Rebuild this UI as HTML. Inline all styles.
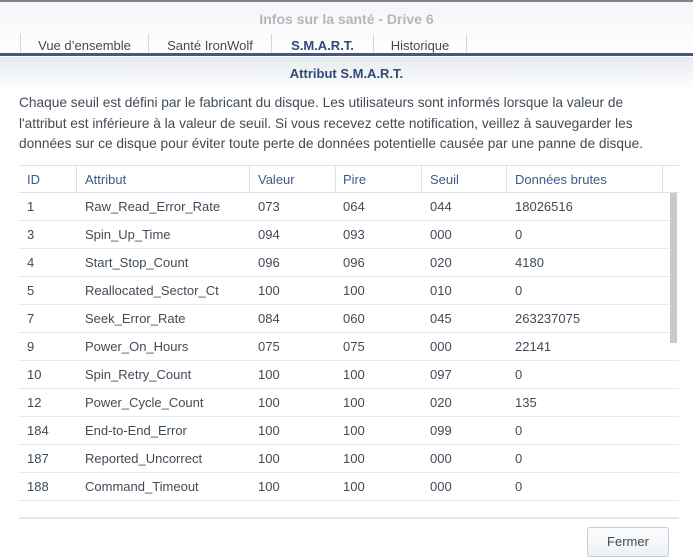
<!DOCTYPE html>
<html><head><meta charset="utf-8"><style>
*{margin:0;padding:0;box-sizing:border-box}
body{width:693px;height:547px;overflow:hidden;font-family:"Liberation Sans",sans-serif;background:#fff;position:relative;color:#414b55}
.top{position:absolute;left:0;top:0;width:693px;height:56px;background:linear-gradient(#f4f5f7,#fff);border-top:2px solid #7f8590}
.title{position:absolute;top:9px;width:100%;text-align:center;font-size:14px;font-weight:bold;color:#b3b7bd}
.tab{position:absolute;top:34px;height:20px;font-size:13px;color:#414b55;text-align:center;border-left:1px solid #d5d9de;line-height:23px}
.blue{position:absolute;left:0;top:53px;width:693px;height:3px;background:#3c5a8c}
.sec{position:absolute;top:57px;left:0;width:693px;height:34px;background:linear-gradient(#e6eaef,#fff);text-align:center;font-size:13px;font-weight:bold;color:#2f4a7a;line-height:34px}
.p{position:absolute;left:19px;top:93px;font-size:13.7px;line-height:20.5px;color:#414b55;white-space:nowrap}
.tbl{position:absolute;left:19px;top:165px;width:660px;border-top:1px solid #dde1e6}
.hd{height:27px;border-bottom:1px solid #dde1e6;position:relative;color:#3a5a8a;font-size:13px}
.row{height:28px;border-bottom:1px solid #e8ebee;position:relative;font-size:13px;color:#414b55}
.c{position:absolute;top:0;line-height:27px;white-space:nowrap}
.hd .sep{position:absolute;top:0;height:27px;border-left:1px solid #dde1e6}
.sb{position:absolute;left:670px;top:193px;width:7px;height:150px;background:#c9c9c9}
.bot{position:absolute;left:19px;top:517px;width:660px;border-top:2px solid #e4e7ea}
.btn{position:absolute;left:587px;top:527px;width:82px;height:30px;border:1px solid #c5cbd2;border-radius:3px;background:linear-gradient(#fbfcfd,#eef1f4);font-size:13px;text-align:center;line-height:28px;color:#414b55}
</style></head><body>
<div class="top"><div class="title">Infos sur la santé - Drive 6</div></div>
<div class="tab" style="left:20px;width:128px">Vue d’ensemble</div>
<div class="tab" style="left:148px;width:123px">Santé IronWolf</div>
<div class="tab" style="left:271px;width:102px;font-weight:bold;color:#2f4a7a">S.M.A.R.T.</div>
<div class="tab" style="left:373px;width:94px;border-right:1px solid #d5d9de">Historique</div>
<div class="blue"></div>
<div class="sec">Attribut S.M.A.R.T.</div>
<div class="p">Chaque seuil est défini par le fabricant du disque. Les utilisateurs sont informés lorsque la valeur de<br>l'attribut est inférieure à la valeur de seuil. Si vous recevez cette notification, veillez à sauvegarder les<br>données sur ce disque pour éviter toute perte de données potentielle causée par une panne de disque.</div>
<div class="tbl">
<div class="hd"><span class="c" style="left:8px">ID</span><span class="sep" style="left:57px"></span><span class="c" style="left:66px">Attribut</span><span class="sep" style="left:230px"></span><span class="c" style="left:239px">Valeur</span><span class="sep" style="left:316px"></span><span class="c" style="left:324px">Pire</span><span class="sep" style="left:402px"></span><span class="c" style="left:411px">Seuil</span><span class="sep" style="left:487px"></span><span class="c" style="left:496px">Données brutes</span><span class="sep" style="left:643px"></span></div>
<div class="row"><span class="c" style="left:8px">1</span><span class="c" style="left:66px">Raw_Read_Error_Rate</span><span class="c" style="left:239px">073</span><span class="c" style="left:324px">064</span><span class="c" style="left:411px">044</span><span class="c" style="left:496px">18026516</span></div>
<div class="row"><span class="c" style="left:8px">3</span><span class="c" style="left:66px">Spin_Up_Time</span><span class="c" style="left:239px">094</span><span class="c" style="left:324px">093</span><span class="c" style="left:411px">000</span><span class="c" style="left:496px">0</span></div>
<div class="row"><span class="c" style="left:8px">4</span><span class="c" style="left:66px">Start_Stop_Count</span><span class="c" style="left:239px">096</span><span class="c" style="left:324px">096</span><span class="c" style="left:411px">020</span><span class="c" style="left:496px">4180</span></div>
<div class="row"><span class="c" style="left:8px">5</span><span class="c" style="left:66px">Reallocated_Sector_Ct</span><span class="c" style="left:239px">100</span><span class="c" style="left:324px">100</span><span class="c" style="left:411px">010</span><span class="c" style="left:496px">0</span></div>
<div class="row"><span class="c" style="left:8px">7</span><span class="c" style="left:66px">Seek_Error_Rate</span><span class="c" style="left:239px">084</span><span class="c" style="left:324px">060</span><span class="c" style="left:411px">045</span><span class="c" style="left:496px">263237075</span></div>
<div class="row"><span class="c" style="left:8px">9</span><span class="c" style="left:66px">Power_On_Hours</span><span class="c" style="left:239px">075</span><span class="c" style="left:324px">075</span><span class="c" style="left:411px">000</span><span class="c" style="left:496px">22141</span></div>
<div class="row"><span class="c" style="left:8px">10</span><span class="c" style="left:66px">Spin_Retry_Count</span><span class="c" style="left:239px">100</span><span class="c" style="left:324px">100</span><span class="c" style="left:411px">097</span><span class="c" style="left:496px">0</span></div>
<div class="row"><span class="c" style="left:8px">12</span><span class="c" style="left:66px">Power_Cycle_Count</span><span class="c" style="left:239px">100</span><span class="c" style="left:324px">100</span><span class="c" style="left:411px">020</span><span class="c" style="left:496px">135</span></div>
<div class="row"><span class="c" style="left:8px">184</span><span class="c" style="left:66px">End-to-End_Error</span><span class="c" style="left:239px">100</span><span class="c" style="left:324px">100</span><span class="c" style="left:411px">099</span><span class="c" style="left:496px">0</span></div>
<div class="row"><span class="c" style="left:8px">187</span><span class="c" style="left:66px">Reported_Uncorrect</span><span class="c" style="left:239px">100</span><span class="c" style="left:324px">100</span><span class="c" style="left:411px">000</span><span class="c" style="left:496px">0</span></div>
<div class="row"><span class="c" style="left:8px">188</span><span class="c" style="left:66px">Command_Timeout</span><span class="c" style="left:239px">100</span><span class="c" style="left:324px">100</span><span class="c" style="left:411px">000</span><span class="c" style="left:496px">0</span></div>
</div>
<div class="sb"></div>
<div class="bot"></div>
<div class="btn">Fermer</div>
</body></html>
